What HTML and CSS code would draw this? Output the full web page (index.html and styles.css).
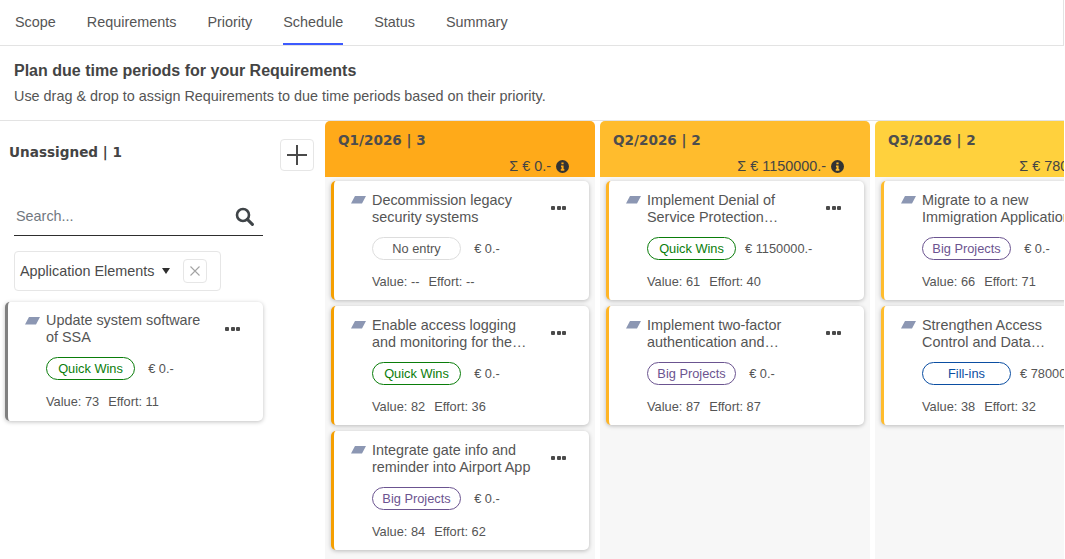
FILE: index.html
```html
<!DOCTYPE html>
<html lang="en">
<head>
<meta charset="utf-8">
<title>Schedule</title>
<link rel="stylesheet" href="styles.css">
</head>
<body>
<div class="app">
  <nav class="tabs">
    <a class="tab">Scope</a>
    <a class="tab">Requirements</a>
    <a class="tab">Priority</a>
    <a class="tab active">Schedule</a>
    <a class="tab">Status</a>
    <a class="tab">Summary</a>
  </nav>
  <header class="intro">
    <h1>Plan due time periods for your Requirements</h1>
    <p>Use drag &amp; drop to assign Requirements to due time periods based on their priority.</p>
  </header>
  <main class="board">
    <aside class="side">
      <div class="side-head">
        <h2>Unassigned | 1</h2>
        <button class="add" aria-label="Add"><svg width="20" height="20" viewBox="0 0 20 20"><path d="M10 0v20M0 10h20" stroke="#4a4a4a" stroke-width="2" fill="none"/></svg></button>
      </div>
      <div class="search">
        <span class="search-text">Search...</span>
        <svg width="19" height="19" viewBox="0 0 19 19"><circle cx="8" cy="8" r="6" fill="none" stroke="#3f4448" stroke-width="2.6"/><path d="M12.4 12.4l5 5" stroke="#3f4448" stroke-width="3" stroke-linecap="round"/></svg>
      </div>
      <div class="filter">
        <span>Application Elements</span>
        <i class="caret"></i>
        <span class="clear"><svg width="10" height="10" viewBox="0 0 10 10"><path d="M.5.5l9 9M9.5.5l-9 9" stroke="#a3a3a3" stroke-width="1.1" fill="none"/></svg></span>
      </div>
      <article class="card grey">
        <svg class="type" width="15" height="8" viewBox="0 0 15 8"><path d="M4 0h11l-4 7.5H0z" fill="#8c97b3"/></svg>
        <div class="body">
          <div class="title">Update system software of SSA</div>
          <div class="meta"><span class="pill green">Quick Wins</span><span class="amt">€ 0.-</span></div>
          <div class="stats"><span>Value: 73</span><span>Effort: 11</span></div>
        </div>
        <b class="more"><i></i><i></i><i></i></b>
      </article>
    </aside>

    <section class="col c1">
      <div class="col-head"><h2>Q1/2026 | 3</h2><div class="sum">Σ € 0.- <svg class="info" width="13" height="13" viewBox="0 0 12 12"><circle cx="6" cy="6" r="6" fill="#333"/><path d="M5 2.3h2v1.7H5zM4.6 5h2.4v3.4h.7V10H4.4V8.4h.7V6.5h-.5z" fill="#ffaa19"/></svg></div></div>
      <article class="card">
        <svg class="type" width="15" height="8" viewBox="0 0 15 8"><path d="M4 0h11l-4 7.5H0z" fill="#8c97b3"/></svg>
        <div class="body">
          <div class="title">Decommission legacy security systems</div>
          <div class="meta"><span class="pill none">No entry</span><span class="amt">€ 0.-</span></div>
          <div class="stats"><span>Value: --</span><span>Effort: --</span></div>
        </div>
        <b class="more"><i></i><i></i><i></i></b>
      </article>
      <article class="card">
        <svg class="type" width="15" height="8" viewBox="0 0 15 8"><path d="M4 0h11l-4 7.5H0z" fill="#8c97b3"/></svg>
        <div class="body">
          <div class="title">Enable access logging and monitoring for the…</div>
          <div class="meta"><span class="pill green">Quick Wins</span><span class="amt">€ 0.-</span></div>
          <div class="stats"><span>Value: 82</span><span>Effort: 36</span></div>
        </div>
        <b class="more"><i></i><i></i><i></i></b>
      </article>
      <article class="card">
        <svg class="type" width="15" height="8" viewBox="0 0 15 8"><path d="M4 0h11l-4 7.5H0z" fill="#8c97b3"/></svg>
        <div class="body">
          <div class="title">Integrate gate info and reminder into Airport App</div>
          <div class="meta"><span class="pill purple">Big Projects</span><span class="amt">€ 0.-</span></div>
          <div class="stats"><span>Value: 84</span><span>Effort: 62</span></div>
        </div>
        <b class="more"><i></i><i></i><i></i></b>
      </article>
    </section>

    <section class="col c2">
      <div class="col-head"><h2>Q2/2026 | 2</h2><div class="sum">Σ € 1150000.- <svg class="info" width="13" height="13" viewBox="0 0 12 12"><circle cx="6" cy="6" r="6" fill="#333"/><path d="M5 2.3h2v1.7H5zM4.6 5h2.4v3.4h.7V10H4.4V8.4h.7V6.5h-.5z" fill="#ffbc2d"/></svg></div></div>
      <article class="card">
        <svg class="type" width="15" height="8" viewBox="0 0 15 8"><path d="M4 0h11l-4 7.5H0z" fill="#8c97b3"/></svg>
        <div class="body">
          <div class="title">Implement Denial of Service Protection…</div>
          <div class="meta"><span class="pill green">Quick Wins</span><span class="amt">€ 1150000.-</span></div>
          <div class="stats"><span>Value: 61</span><span>Effort: 40</span></div>
        </div>
        <b class="more"><i></i><i></i><i></i></b>
      </article>
      <article class="card">
        <svg class="type" width="15" height="8" viewBox="0 0 15 8"><path d="M4 0h11l-4 7.5H0z" fill="#8c97b3"/></svg>
        <div class="body">
          <div class="title">Implement two-factor authentication and…</div>
          <div class="meta"><span class="pill purple">Big Projects</span><span class="amt">€ 0.-</span></div>
          <div class="stats"><span>Value: 87</span><span>Effort: 87</span></div>
        </div>
        <b class="more"><i></i><i></i><i></i></b>
      </article>
    </section>

    <section class="col c3">
      <div class="col-head"><h2>Q3/2026 | 2</h2><div class="sum">Σ € 780000.- <svg class="info" width="13" height="13" viewBox="0 0 12 12"><circle cx="6" cy="6" r="6" fill="#333"/><path d="M5 2.3h2v1.7H5zM4.6 5h2.4v3.4h.7V10H4.4V8.4h.7V6.5h-.5z" fill="#ffd13d"/></svg></div></div>
      <article class="card">
        <svg class="type" width="15" height="8" viewBox="0 0 15 8"><path d="M4 0h11l-4 7.5H0z" fill="#8c97b3"/></svg>
        <div class="body">
          <div class="title">Migrate to a new Immigration Application</div>
          <div class="meta"><span class="pill purple">Big Projects</span><span class="amt">€ 0.-</span></div>
          <div class="stats"><span>Value: 66</span><span>Effort: 71</span></div>
        </div>
        <b class="more"><i></i><i></i><i></i></b>
      </article>
      <article class="card">
        <svg class="type" width="15" height="8" viewBox="0 0 15 8"><path d="M4 0h11l-4 7.5H0z" fill="#8c97b3"/></svg>
        <div class="body">
          <div class="title">Strengthen Access Control and Data…</div>
          <div class="meta"><span class="pill blue">Fill-ins</span><span class="amt">€ 780000.-</span></div>
          <div class="stats"><span>Value: 38</span><span>Effort: 32</span></div>
        </div>
        <b class="more"><i></i><i></i><i></i></b>
      </article>
    </section>
  </main>
</div>
</body>
</html>
```
FILE: styles.css
```css
* { box-sizing: border-box; }
html, body { margin: 0; height: 100%; overflow: hidden; background: #fff; }
body { font-family: "Liberation Sans", Arial, sans-serif; color: #4a4a4a; font-size: 14.4px; }
.app { width: 1064px; height: 559px; display: flex; flex-direction: column; overflow: hidden; }

.tabs { height: 46px; flex: none; display: flex; gap: 31px; padding-left: 15px; border-bottom: 1px solid #e3e3e3; border-right: 1px solid #e3e3e3; }
.tab { display: block; height: 45px; line-height: 44px; font-size: 14.4px; color: #555; }
.tab.active { box-shadow: inset 0 -2px 0 #3d5afe; }

.intro { height: 75px; flex: none; padding: 16px 14px 0; border-bottom: 1px solid #e3e3e3; }
.intro h1 { margin: 0; font-size: 16px; line-height: 18px; font-weight: 700; color: #444; }
.intro p { margin: 8px 0 0; font-size: 14.4px; line-height: 16px; color: #555; }

.board { flex: 1; min-height: 0; display: flex; gap: 5px; overflow: hidden; }

.side { width: 320px; flex: none; padding: 0 5px; }
.side-head { height: 50px; display: flex; justify-content: space-between; align-items: flex-start; padding: 18px 1px 0 4px; }
.side-head h2 { margin: 5px 0 0; font-family: "DejaVu Sans", sans-serif; font-size: 13.6px; line-height: 16px; font-weight: 700; color: #444; }
.add { width: 34px; height: 32px; padding: 0; display: flex; align-items: center; justify-content: center; background: #fff; border: 1px solid #e6e6e6; border-radius: 4px; }

.search { width: 249px; height: 42px; margin: 23px 0 0 9px; display: flex; align-items: center; justify-content: space-between; padding: 3px 9px 0 2px; border-bottom: 1px solid #2e2e2e; }
.search-text { color: #72787f; font-size: 14.4px; }

.filter { width: 207px; height: 40px; margin: 15px 0 0 9px; display: flex; align-items: center; padding-left: 5px; border: 1px solid #e6e6e6; border-radius: 4px; font-size: 14.4px; }
.caret { margin-left: 8px; width: 0; height: 0; border-left: 4.5px solid transparent; border-right: 4.5px solid transparent; border-top: 6px solid #2e2e2e; }
.clear { width: 24px; height: 24px; margin-left: 13px; display: flex; align-items: center; justify-content: center; border: 1px solid #e6e6e6; border-radius: 4px; }

.col { width: 270px; flex: none; background: #f7f7f7; border-radius: 5px 5px 0 0; }
.col-head { height: 56px; padding: 10px 26px 0 13px; margin-bottom: 4px; border-radius: 5px 5px 0 0; }
.c1 .col-head { background: #ffaa19; }
.c2 .col-head { background: #ffbc2d; }
.c3 .col-head { background: #ffd13d; }
.col-head h2 { margin: 0; font-family: "DejaVu Sans", sans-serif; font-size: 13.6px; line-height: 18px; font-weight: 700; color: #4d4d4d; }
.sum { display: flex; justify-content: flex-end; align-items: center; gap: 5px; margin-top: 9px; font-size: 14.4px; line-height: 16px; white-space: nowrap; color: #444; }

.card { position: relative; width: 258px; height: 119px; margin: 0 0 6px 6px; padding: 11px 0 0 38px; background: #fff; border-left: 3px solid #f59f00; border-radius: 5px; box-shadow: 0 1px 4px rgba(0,0,0,.25); }
.c2 .card { border-left-color: #ffb525; }
.c3 .card { border-left-color: #ffbc2d; }
.side .card { margin: 11px 0 0; padding-top: 10px; border-left-color: #808080; }
.type { position: absolute; left: 17px; top: 15px; }
.title { width: 165px; font-size: 14.4px; line-height: 17px; height: 34px; color: #555; }
.meta { display: flex; align-items: center; gap: 9px; margin-top: 11px; font-size: 12.8px; color: #555; white-space: nowrap; }
.amt { min-width: 34px; text-align: center; }
.pill { width: 89px; height: 23px; line-height: 21px; text-align: center; border: 1px solid #ddd; border-radius: 12px; font-size: 12.8px; }
.pill.green { color: #0a7d0a; border-color: #0a7d0a; }
.pill.purple { color: #6b5490; border-color: #6b5490; }
.pill.blue { color: #0b4ea2; border-color: #0b4ea2; }
.pill.none { color: #555; border-color: #ddd; }
.stats { display: flex; gap: 9px; margin-top: 14px; font-size: 12.8px; line-height: 15px; color: #555; }
.more { position: absolute; right: 23px; top: 25px; display: flex; gap: 1.5px; }
.more i { display: block; width: 4px; height: 4px; border-radius: 1px; background: #4a4a4a; }
```
